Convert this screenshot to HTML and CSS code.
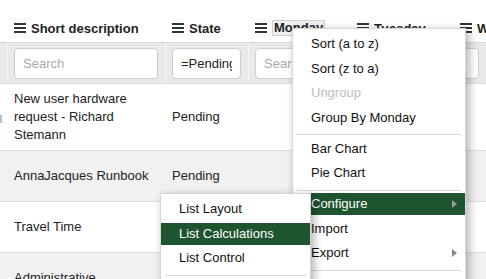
FILE: index.html
```html
<!DOCTYPE html>
<html lang="en">

<head>
    <meta charset="UTF-8">
    <meta name="viewport" content="width=device-width, initial-scale=1.0">
    <title>List</title>
    <link rel="stylesheet" href="styles.css">
</head>

<body>
    <div class="list">
        <div class="row head">
            <div class="cell"></div>
            <div class="cell"><svg class="bars" viewBox="0 0 12 10"><rect y="0" width="12" height="2"/><rect y="4" width="12" height="2"/><rect y="8" width="12" height="2"/></svg>Short description</div>
            <div class="cell"><svg class="bars" viewBox="0 0 12 10"><rect y="0" width="12" height="2"/><rect y="4" width="12" height="2"/><rect y="8" width="12" height="2"/></svg>State</div>
            <div class="cell"><svg class="bars" viewBox="0 0 12 10"><rect y="0" width="12" height="2"/><rect y="4" width="12" height="2"/><rect y="8" width="12" height="2"/></svg><span class="focused">Monday</span></div>
            <div class="cell"><svg class="bars" viewBox="0 0 12 10"><rect y="0" width="12" height="2"/><rect y="4" width="12" height="2"/><rect y="8" width="12" height="2"/></svg>Tuesday</div>
            <div class="cell"><svg class="bars" viewBox="0 0 12 10"><rect y="0" width="12" height="2"/><rect y="4" width="12" height="2"/><rect y="8" width="12" height="2"/></svg>Wednesday</div>
        </div>
        <div class="row filters">
            <div class="cell"></div>
            <div class="cell"><input placeholder="Search"></div>
            <div class="cell"><input value="=Pending"></div>
            <div class="cell"><input placeholder="Search"></div>
            <div class="cell"><input placeholder="Search"></div>
            <div class="cell"><input placeholder="Search"></div>
        </div>
        <div class="row item">
            <div class="cell"><span class="mark"></span></div>
            <div class="cell">New user hardware request - Richard Stemann</div>
            <div class="cell">Pending</div>
            <div class="cell"></div>
            <div class="cell"></div>
            <div class="cell"></div>
        </div>
        <div class="row item">
            <div class="cell"></div>
            <div class="cell">AnnaJacques Runbook</div>
            <div class="cell">Pending</div>
            <div class="cell"></div>
            <div class="cell"></div>
            <div class="cell"></div>
        </div>
        <div class="row item">
            <div class="cell"></div>
            <div class="cell">Travel Time</div>
            <div class="cell"></div>
            <div class="cell"></div>
            <div class="cell"></div>
            <div class="cell"></div>
        </div>
        <div class="row item">
            <div class="cell"></div>
            <div class="cell">Administrative</div>
            <div class="cell"></div>
            <div class="cell"></div>
            <div class="cell"></div>
            <div class="cell"></div>
        </div>
    </div>

    <ul class="menu main-menu">
        <li>Sort (a to z)</li>
        <li>Sort (z to a)</li>
        <li class="disabled">Ungroup</li>
        <li>Group By Monday</li>
        <li class="sep"></li>
        <li>Bar Chart</li>
        <li>Pie Chart</li>
        <li class="sep"></li>
        <li class="active sub">Configure</li>
        <li>Import</li>
        <li class="sub">Export</li>
        <li class="sep"></li>
    </ul>

    <ul class="menu sub-menu">
        <li>List Layout</li>
        <li class="active">List Calculations</li>
        <li>List Control</li>
        <li class="sep"></li>
    </ul>
</body>

</html>
```

FILE: styles.css
```css
body {
    margin: 0;
    padding-top: 14px;
    font-family: "Liberation Sans", Arial, sans-serif;
    font-size: 13px;
    color: #222;
    background: #fff;
    overflow: hidden;
}

.list {
    width: 486px;
}

.row {
    display: grid;
    grid-template-columns: 7px 158px 83px 102px 103px 1fr;
}

.cell {
    display: flex;
    align-items: center;
    padding: 0 7px;
    white-space: nowrap;
    overflow: hidden;
}

.row .cell:first-child {
    padding: 0;
}

/* header */
.head {
    height: 28px;
    font-weight: bold;
    color: #222;
}

.bars {
    width: 12px;
    height: 10px;
    fill: #333;
    margin-right: 5px;
    flex-shrink: 0;
}

.focused {
    background: #f0f0f0;
    border: 1px solid #cfcfcf;
    padding: 0 1px;
    line-height: 14px;
}

/* filters */
.filters {
    height: 40px;
    background: #e9e9e9;
    border-top: 1px solid #d8d8d8;
    border-bottom: 1px solid #dcdcdc;
}

.filters .cell {
    border-left: 1px solid #f6f6f6;
    padding: 0 7px 0 6px;
}

.filters .cell:first-child {
    border-left: none;
}

.filters input {
    width: 100%;
    min-width: 0;
    height: 31px;
    box-sizing: border-box;
    border: 1px solid #cdcdcd;
    border-radius: 4px;
    padding: 0 8px;
    font-family: inherit;
    font-size: 13px;
    color: #222;
    background: #fff;
}

.filters input::placeholder {
    color: #a8a8a8;
}

/* rows */
.item {
    border-bottom: 1px solid #dedede;
}

.item .cell {
    padding: 6px 7px;
    min-height: 38px;
    line-height: 18px;
    white-space: normal;
}

.item:nth-child(odd) {
    background: #fff;
}

.item:nth-child(even) {
    background: #f1f1f1;
}

.mark {
    width: 2px;
    height: 8px;
    margin-top: 4px;
    background: #a9c2dc;
}

/* menus */
.menu {
    position: absolute;
    margin: 0;
    padding: 4px 0 0;
    list-style: none;
    background: #fff;
    border: 1px solid #d6d6d6;
    box-shadow: 3px 3px 9px rgba(0, 0, 0, 0.3);
    display: flex;
    flex-direction: column;
    gap: 2.5px;
    color: #111;
}

.menu li {
    line-height: 22px;
    height: 22px;
    padding: 0 10px 0 18px;
    position: relative;
}

.menu li.sep {
    height: 3px;
    margin: 0 4px;
    padding: 0;
    border-bottom: 1px solid #d9d9d9;
}

.menu li.disabled {
    color: #bdbdbd;
}

.menu li.active {
    background: #1f5430;
    color: #fff;
}

.menu li.sub::after {
    content: "";
    position: absolute;
    right: 8px;
    top: 7px;
    border-left: 5px solid #888;
    border-top: 4px solid transparent;
    border-bottom: 4px solid transparent;
}

.menu li.active.sub::after {
    border-left-color: #9a9a9a;
}

.main-menu {
    left: 292px;
    top: 28px;
    width: 172px;
    height: 270px;
}

.sub-menu {
    left: 160px;
    top: 193px;
    width: 149px;
    height: 100px;
    z-index: 2;
}
```
